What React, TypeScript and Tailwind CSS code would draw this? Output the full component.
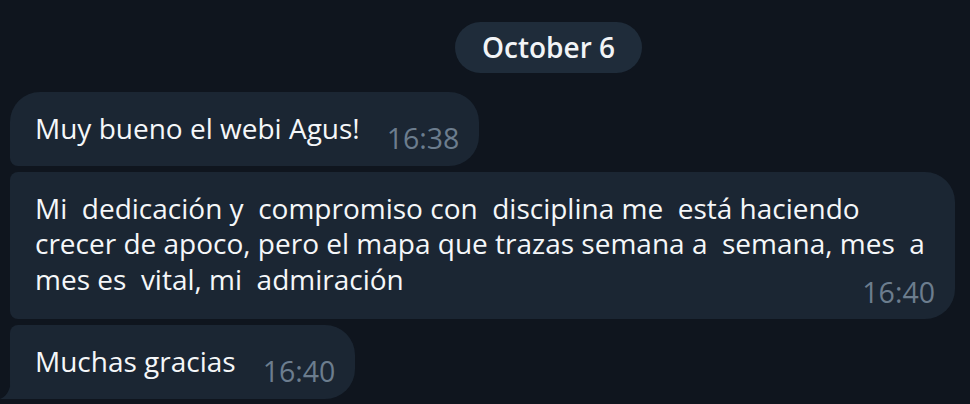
const font = { fontFamily: '"Open Sans", "Noto Sans", sans-serif' };

type BubbleProps = {
  text: string;
  time: string;
  corners: string;
  tail?: boolean;
};

const Bubble = ({ text, time, corners, tail }: BubbleProps) => (
  <div
    className={`relative flex items-end gap-[27px] self-start bg-[#1b2633] pl-[25px] pr-[20px] py-[19px] ${corners}`}
  >
    <div className="whitespace-pre text-[28px] leading-[35.5px] text-[#f5f7f9]">{text}</div>
    <div className="shrink-0 translate-y-[10px] text-[28.5px] leading-[35.5px] text-[#6c7d8e]">{time}</div>
    {tail && (
      <svg className="absolute bottom-0 left-[-10px]" width="11" height="18" viewBox="0 0 11 18">
        <path d="M11 0 V18 H0 C6 16 10 10 11 0 Z" fill="#1b2633" />
      </svg>
    )}
  </div>
);

const LongBubble = ({ text, time }: { text: string; time: string }) => (
  <div className="flex w-[945px] flex-col rounded-l-[8px] rounded-r-[30px] bg-[#1b2633] pl-[25px] pr-[20px] pt-[19px] pb-[22px]">
    <div className="whitespace-pre text-[28px] leading-[35.5px] text-[#f5f7f9]">{text}</div>
    <div className="-mt-[35.5px] translate-y-[13px] self-end text-[28.5px] leading-[35.5px] text-[#6c7d8e]">
      {time}
    </div>
  </div>
);

export default function App() {
  return (
    <div className="h-[404px] w-[970px] overflow-hidden bg-[#0f151e]" style={font}>
      <div className="flex justify-center pt-[22px] pl-[127px]">
        <div className="rounded-full bg-[#1f2c3a] px-[27px] py-[7px] text-[28px] font-semibold leading-[37px] text-[#f2f4f6]">
          October 6
        </div>
      </div>
      <div className="mt-[19px] flex flex-col gap-[6px] pl-[10px]">
        <Bubble
          text="Muy bueno el webi Agus!"
          time="16:38"
          corners="rounded-tl-[30px] rounded-bl-[8px] rounded-r-[30px]"
        />
        <LongBubble
          text={
            "Mi  dedicación y  compromiso con  disciplina me  está haciendo\ncrecer de apoco, pero el mapa que trazas semana a  semana, mes  a\nmes es  vital, mi  admiración"
          }
          time="16:40"
        />
        <Bubble
          tail
          text="Muchas gracias"
          time="16:40"
          corners="rounded-tl-[8px] rounded-bl-none rounded-r-[30px]"
        />
      </div>
    </div>
  );
}
